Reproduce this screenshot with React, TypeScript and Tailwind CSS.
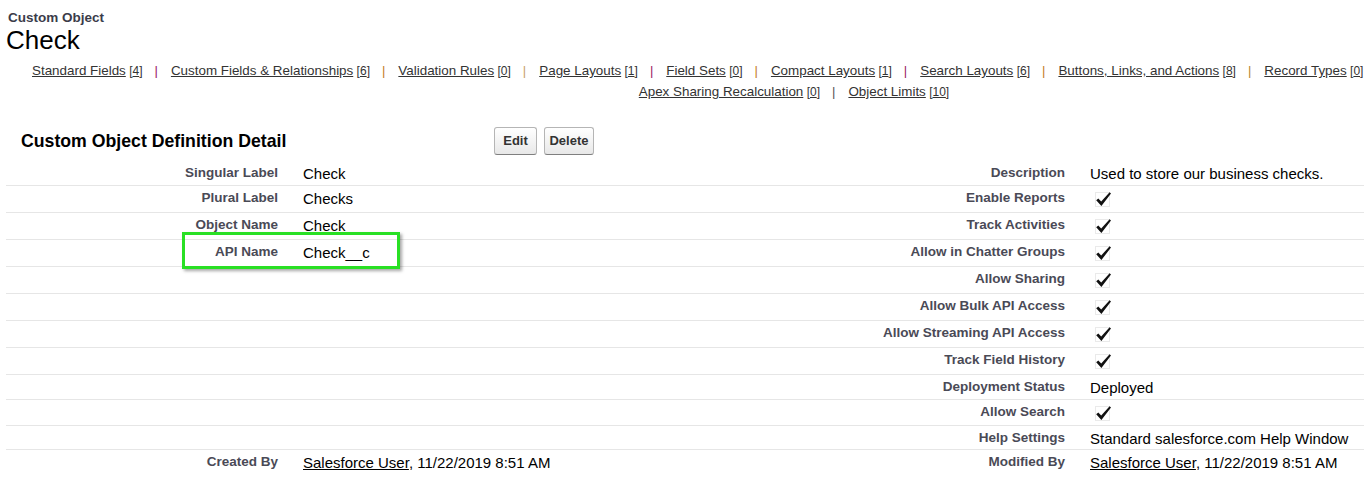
import React from "react";

type Val = { kind: "text"; text: string } | { kind: "check" } | { kind: "user" } | { kind: "none" };

const Check = () => (
  <svg width="17" height="17" viewBox="0 0 17 17" className="ml-[5px] mt-[5px] block">
    <rect x="0.5" y="1.5" width="14" height="14" fill="none" stroke="#d4d4d4" strokeWidth="1" strokeDasharray="1 1" />
    <polygon points="1.2,9.2 3.3,7.4 6.2,10.6 14.6,1.2 16,2.6 6.4,15" fill="#111" />
  </svg>
);

const UserVal = () => (
  <span>
    <span className="underline">Salesforce User</span>, 11/22/2019 8:51 AM
  </span>
);

function Value({ v }: { v: Val }) {
  if (v.kind === "none") return null;
  if (v.kind === "check") return <Check />;
  if (v.kind === "user")
    return (
      <div className="pt-[4px] text-[15px] leading-[18px] text-black whitespace-nowrap">
        <UserVal />
      </div>
    );
  return <div className="pt-[4px] text-[15px] leading-[18px] text-black whitespace-nowrap">{v.text}</div>;
}

type Row = { h: string; l: string; lv: Val; r: string; rv: Val; last?: boolean };

const t = (text: string): Val => ({ kind: "text", text });
const c: Val = { kind: "check" };
const n: Val = { kind: "none" };
const u: Val = { kind: "user" };

const rows: Row[] = [
  { h: "h-[25px]", l: "Singular Label", lv: t("Check"), r: "Description", rv: t("Used to store our business checks.") },
  { h: "h-[27px]", l: "Plural Label", lv: t("Checks"), r: "Enable Reports", rv: c },
  { h: "h-[27px]", l: "Object Name", lv: t("Check"), r: "Track Activities", rv: c },
  { h: "h-[27px]", l: "API Name", lv: t("Check__c"), r: "Allow in Chatter Groups", rv: c },
  { h: "h-[27px]", l: "", lv: n, r: "Allow Sharing", rv: c },
  { h: "h-[27px]", l: "", lv: n, r: "Allow Bulk API Access", rv: c },
  { h: "h-[27px]", l: "", lv: n, r: "Allow Streaming API Access", rv: c },
  { h: "h-[27px]", l: "", lv: n, r: "Track Field History", rv: c },
  { h: "h-[25px]", l: "", lv: n, r: "Deployment Status", rv: t("Deployed") },
  { h: "h-[26px]", l: "", lv: n, r: "Allow Search", rv: c },
  { h: "h-[24px]", l: "", lv: n, r: "Help Settings", rv: t("Standard salesforce.com Help Window") },
  { h: "h-[26px]", l: "Created By", lv: u, r: "Modified By", rv: u, last: true },
];

const links1: { name: string; count: string; sep: string }[] = [
  { name: "Standard Fields", count: "4", sep: "text-[#9a1a63]" },
  { name: "Custom Fields & Relationships", count: "6", sep: "text-[#c47c22]" },
  { name: "Validation Rules", count: "0", sep: "text-[#c9a06a]" },
  { name: "Page Layouts", count: "1", sep: "text-[#9a1a63]" },
  { name: "Field Sets", count: "0", sep: "text-[#c47c22]" },
  { name: "Compact Layouts", count: "1", sep: "text-[#9a1a63]" },
  { name: "Search Layouts", count: "6", sep: "text-[#c47c22]" },
  { name: "Buttons, Links, and Actions", count: "8", sep: "text-[#b8862b]" },
  { name: "Record Types", count: "0", sep: "" },
];

function LinkItem({ name, count }: { name: string; count: string }) {
  return (
    <>
      <span className="underline text-[13.4px] text-[#333]">{name}</span>
      <span className="text-[12px] text-[#333]">
        {" "}[<span className="underline">{count}</span>]
      </span>
    </>
  );
}

export default function App() {
  return (
    <div className="w-[1364px] h-[484px] overflow-hidden bg-white font-['Liberation_Sans',Arial,sans-serif]">
      <div className="pt-[11px]">
        <div className="pl-[8px] text-[13.5px] leading-[14px] font-bold text-[#3b3c4a]">Custom Object</div>
        <div className="pl-[6px] text-[26px] leading-[30px] text-black">Check</div>
      </div>

      <div className="mt-[5px]">
        <div className="pl-[32px] whitespace-nowrap leading-[20px]">
          {links1.map((l, i) => (
            <React.Fragment key={l.name}>
              <LinkItem name={l.name} count={l.count} />
              {i < links1.length - 1 && (
                <span className={`ml-[12px] mr-[13px] text-[13px] ${l.sep}`}>|</span>
              )}
            </React.Fragment>
          ))}
        </div>
        <div className="w-[1588px] text-center whitespace-nowrap leading-[20px]">
          <LinkItem name="Apex Sharing Recalculation" count="0" />
          <span className="ml-[12px] mr-[13px] text-[13px] text-[#555]">|</span>
          <LinkItem name="Object Limits" count="10" />
        </div>
      </div>

      <div className="mt-[25px] flex items-center h-[28px] pl-[21px]">
        <div className="w-[473px] text-[17.7px] font-bold text-black leading-[20px]">Custom Object Definition Detail</div>
        <div className="flex gap-[7px]">
          <button className="w-[43px] h-[28px] rounded-[3px] border border-[#b5b5b5] border-b-[#7f7f7f] bg-gradient-to-b from-[#ffffff] to-[#e8e8e8] text-[13px] font-bold text-[#333]">
            Edit
          </button>
          <button className="w-[50px] h-[28px] rounded-[3px] border border-[#b5b5b5] border-b-[#7f7f7f] bg-gradient-to-b from-[#ffffff] to-[#e8e8e8] text-[13px] font-bold text-[#333]">
            Delete
          </button>
        </div>
      </div>

      <div className="relative ml-[6px] mt-[6px] w-[1358px]">
        {rows.map((r, i) => (
          <div
            key={i}
            className={`grid grid-cols-[284px_400px_388px_286px] ${r.h} ${r.last ? "" : "border-b border-[#e6e6e6]"}`}
          >
            <div className="pr-[12px] pt-[4px] text-right text-[13.5px] leading-[16px] font-bold text-[#4a4a56] whitespace-nowrap">
              {r.l}
            </div>
            <div className="pl-[13px]">
              <Value v={r.lv} />
            </div>
            <div className="pr-[13px] pt-[4px] text-right text-[13.5px] leading-[16px] font-bold text-[#4a4a56] whitespace-nowrap">
              {r.r}
            </div>
            <div className="pl-[12px]">
              <Value v={r.rv} />
            </div>
          </div>
        ))}
        <div className="absolute left-[176px] top-[71px] w-[218px] h-[37px] border-[3px] border-[#29e024] shadow-[2px_2px_3px_rgba(0,0,0,0.35)] pointer-events-none" />
      </div>
    </div>
  );
}
